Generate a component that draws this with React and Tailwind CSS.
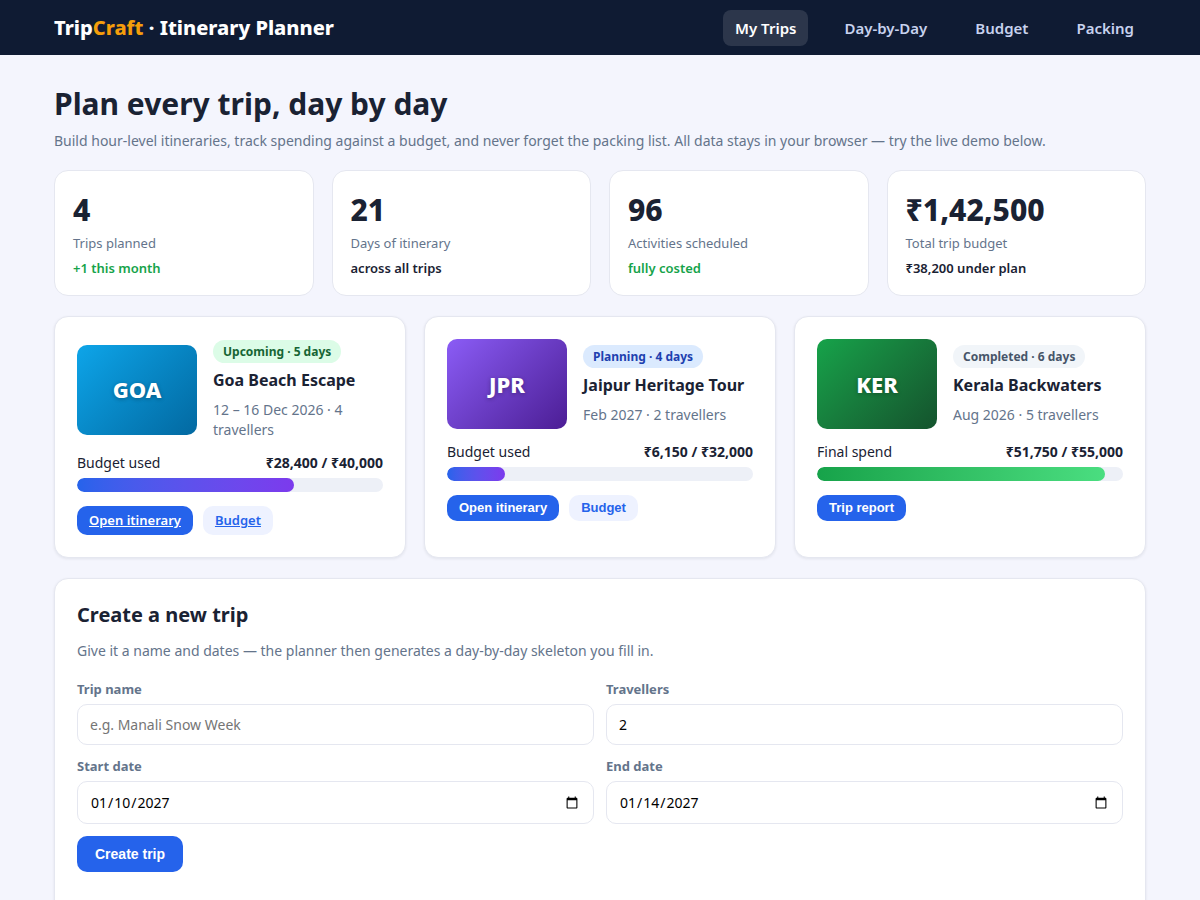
import React from 'react';

const navItems = [
    { href: '#trips', label: 'My Trips', active: true },
    { href: '#days', label: 'Day-by-Day' },
    { href: '#budget', label: 'Budget' },
    { href: '#packing', label: 'Packing' }
];

const stats = [
    { value: '4', label: 'Trips planned', note: '+1 this month', positive: true },
    { value: '21', label: 'Days of itinerary', note: 'across all trips' },
    { value: '96', label: 'Activities scheduled', note: 'fully costed', positive: true },
    { value: '₹1,42,500', label: 'Total trip budget', note: '₹38,200 under plan' }
];

const trips = [
    {
        code: 'GOA',
        name: 'Goa Beach Escape',
        status: 'Upcoming · 5 days',
        meta: '12 – 16 Dec 2026 · 4 travellers',
        spendLabel: 'Budget used',
        spend: '₹28,400 / ₹40,000',
        percent: 71,
        cover: 'from-[#0ea5e9] to-[#0369a1]',
        badge: 'bg-[#dcfce7] text-[#166534]',
        bar: 'from-[#2563eb] to-[#7c3aed]',
        actions: [
            { label: 'Open itinerary', href: '#days', primary: true },
            { label: 'Budget', href: '#budget' }
        ]
    },
    {
        code: 'JPR',
        name: 'Jaipur Heritage Tour',
        status: 'Planning · 4 days',
        meta: 'Feb 2027 · 2 travellers',
        spendLabel: 'Budget used',
        spend: '₹6,150 / ₹32,000',
        percent: 19,
        cover: 'from-[#8b5cf6] to-[#4c1d95]',
        badge: 'bg-[#dbeafe] text-[#1e40af]',
        bar: 'from-[#2563eb] to-[#7c3aed]',
        actions: [
            { label: 'Open itinerary', primary: true },
            { label: 'Budget' }
        ]
    },
    {
        code: 'KER',
        name: 'Kerala Backwaters',
        status: 'Completed · 6 days',
        meta: 'Aug 2026 · 5 travellers',
        spendLabel: 'Final spend',
        spend: '₹51,750 / ₹55,000',
        percent: 94,
        cover: 'from-[#16a34a] to-[#14532d]',
        badge: 'bg-[#f1f5f9] text-[#475569]',
        bar: 'from-[#16a34a] to-[#4ade80]',
        actions: [{ label: 'Trip report', primary: true }]
    }
];

const fields = [
    { id: 'trip-name', label: 'Trip name', type: 'text', placeholder: 'e.g. Manali Snow Week' },
    { id: 'travellers', label: 'Travellers', type: 'number', value: '2' },
    { id: 'start-date', label: 'Start date', type: 'date', value: '2027-01-10' },
    { id: 'end-date', label: 'End date', type: 'date', value: '2027-01-14' }
];

const Header = () => (
    <header className="bg-[#0f1b33]">
        <div className="max-w-[1140px] mx-auto px-6 h-[55px] flex items-center justify-between">
            <a href="#top" className="text-xl font-extrabold text-white">
                Trip<span className="text-[#f59e0b]">Craft</span> · Itinerary Planner
            </a>
            <nav className="flex items-center gap-6">
                {navItems.map((item) => (
                    <a
                        key={item.label}
                        href={item.href}
                        className={`px-3 py-2 rounded-lg text-[15px] leading-5 font-semibold ${item.active
                            ? 'bg-white/12 text-white'
                            : 'text-[#c7d2ee]'
                            }`}
                    >
                        {item.label}
                    </a>
                ))}
            </nav>
        </div>
    </header>
);

const StatCard = ({ stat }) => (
    <div className="bg-white border border-[#e5e7f0] rounded-[14px] p-[18px]">
        <div className="text-[30px] leading-[42px] font-extrabold">{stat.value}</div>
        <div className="text-[13px] leading-6 text-[#64748b]">{stat.label}</div>
        <div className={`mt-1 text-[13px] leading-[18px] font-semibold ${stat.positive ? 'text-[#16a34a]' : ''}`}>
            {stat.note}
        </div>
    </div>
);

const TripAction = ({ action }) => {
    const tone = action.primary ? 'bg-[#2563eb] text-white' : 'bg-[#eef2ff] text-[#2563eb]';

    if (action.href) {
        return (
            <a
                href={action.href}
                className={`px-3 py-[6px] rounded-[10px] text-[13px] leading-[17px] font-semibold underline ${tone}`}
            >
                {action.label}
            </a>
        );
    }
    return (
        <button
            type="button"
            className={`px-3 py-[6px] rounded-[10px] font-['Liberation_Sans',sans-serif] text-[13px] leading-[14px] font-bold ${tone}`}
        >
            {action.label}
        </button>
    );
};

const TripCard = ({ trip }) => (
    <article className="bg-white border border-[#e5e7f0] rounded-[14px] p-[22px] shadow-[0_1px_3px_rgba(15,23,42,0.08)]">
        <div className="flex items-center gap-4">
            <div
                className={`w-[120px] h-[90px] shrink-0 rounded-[10px] flex items-center justify-center bg-linear-135 ${trip.cover} text-white text-[22px] font-extrabold [text-shadow:0_1px_4px_rgba(0,0,0,0.3)]`}
            >
                {trip.code}
            </div>
            <div className="pt-px">
                <span className={`block w-fit px-[10px] py-[3px] rounded-full text-xs leading-[17px] font-bold ${trip.badge}`}>
                    {trip.status}
                </span>
                <h3 className="mt-[5px] text-base leading-6 font-bold">{trip.name}</h3>
                <p className="mt-2 text-sm text-[#64748b]">{trip.meta}</p>
            </div>
        </div>
        <div className="mt-[11px] flex justify-between text-sm leading-6">
            <span>{trip.spendLabel}</span>
            <b>{trip.spend}</b>
        </div>
        <div className="mt-[3px] h-[14px] rounded-lg bg-[#edf0f7] overflow-hidden">
            <div
                className={`h-full rounded-lg bg-linear-to-r ${trip.bar}`}
                style={{ width: `${trip.percent}%` }}
            />
        </div>
        <div className="mt-[14px] flex items-center gap-[10px]">
            {trip.actions.map((action) => (
                <TripAction key={action.label} action={action} />
            ))}
        </div>
    </article>
);

const Field = ({ field }) => (
    <div>
        <label htmlFor={field.id} className="block mb-[6px] text-[13px] leading-[18px] font-bold text-[#64748b]">
            {field.label}
        </label>
        <input
            id={field.id}
            type={field.type}
            placeholder={field.placeholder}
            defaultValue={field.value}
            className={`block w-full px-3 border border-[#e5e7f0] rounded-[10px] bg-white text-sm text-black placeholder:text-[#757575] ${field.type === 'date' ? 'h-[43px]' : 'h-[41px]'}`}
        />
    </div>
);

const CreateTrip = () => (
    <section className="mt-5 bg-white border border-[#e5e7f0] rounded-[14px] p-[22px] shadow-[0_1px_3px_rgba(15,23,42,0.08)]">
        <h2 className="text-xl leading-7 font-bold">Create a new trip</h2>
        <p className="mt-[10px] text-sm leading-6 text-[#64748b]">
            Give it a name and dates — the planner then generates a day-by-day skeleton you fill in.
        </p>
        <form className="mt-[17px]" onSubmit={(e) => e.preventDefault()}>
            <div className="grid grid-cols-2 gap-3">
                {fields.map((field) => (
                    <Field key={field.id} field={field} />
                ))}
            </div>
            <button
                type="submit"
                className="mt-3 px-[18px] py-[10px] rounded-[10px] bg-[#2563eb] text-white font-['Liberation_Sans',sans-serif] text-sm leading-4 font-bold"
            >
                Create trip
            </button>
        </form>
        {/* generated skeleton goes here */}
        <div className="mt-4 min-h-10" aria-live="polite" />
    </section>
);

const App = () => (
    <div id="top" className="min-h-screen bg-[#f4f5fd] text-[#1a2233] font-['Noto_Sans',sans-serif]">
        <Header />
        <main className="max-w-[1140px] mx-auto px-6 pt-7 pb-10">
            <h1 className="text-[30px] leading-[42px] font-bold">Plan every trip, day by day</h1>
            <p className="mt-1 text-sm leading-6 text-[#64748b]">
                Build hour-level itineraries, track spending against a budget, and never forget the packing list. All data stays in your browser — try the live demo below.
            </p>
            <div className="mt-[17px] grid grid-cols-4 gap-[18px]">
                {stats.map((stat) => (
                    <StatCard key={stat.label} stat={stat} />
                ))}
            </div>
            <div className="mt-5 grid grid-cols-3 gap-[18px]">
                {trips.map((trip) => (
                    <TripCard key={trip.code} trip={trip} />
                ))}
            </div>
            <CreateTrip />
        </main>
    </div>
);

export default App;
